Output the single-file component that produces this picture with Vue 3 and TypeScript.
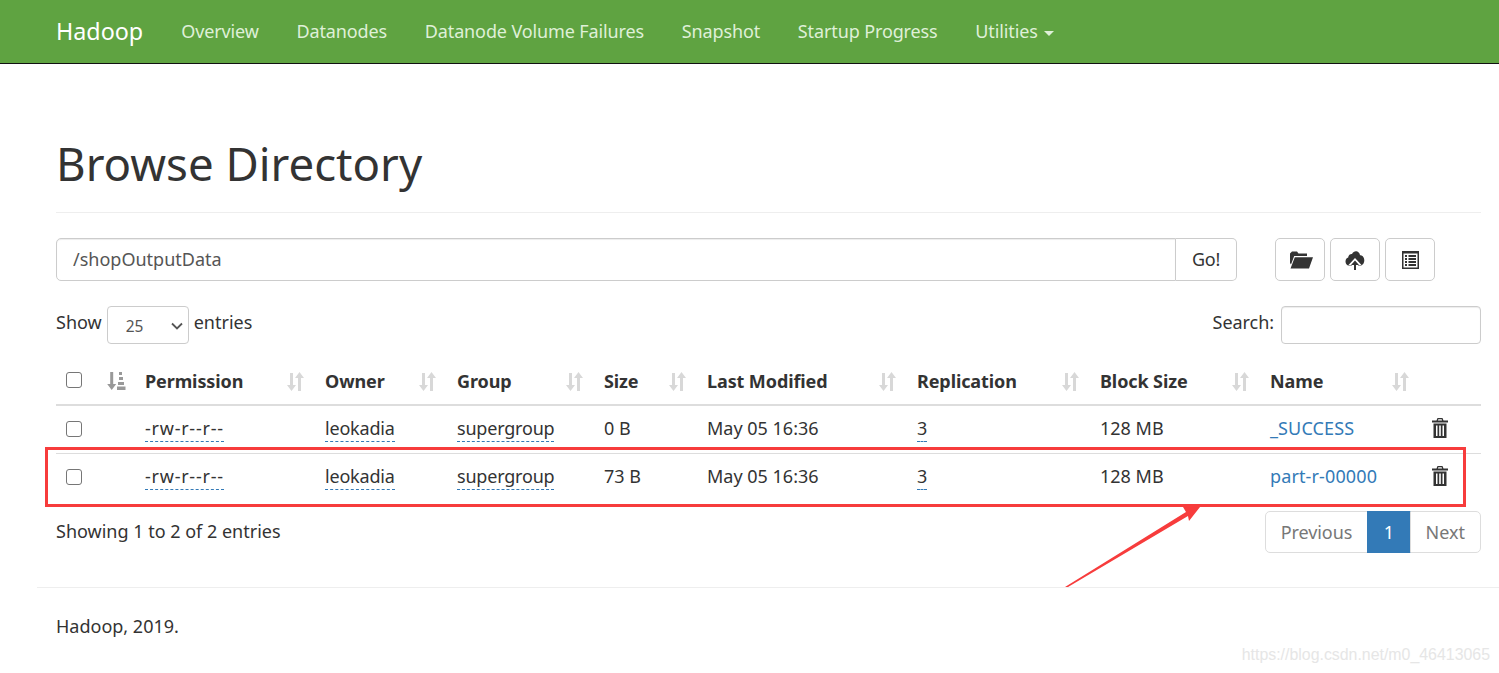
<script setup lang="ts">
const navItems = ['Overview', 'Datanodes', 'Datanode Volume Failures', 'Snapshot', 'Startup Progress']
const columns = ['Permission', 'Owner', 'Group', 'Size', 'Last Modified', 'Replication', 'Block Size', 'Name']
const rows = [
  { perm: '-rw-r--r--', owner: 'leokadia', group: 'supergroup', size: '0 B', name: '_SUCCESS' },
  { perm: '-rw-r--r--', owner: 'leokadia', group: 'supergroup', size: '73 B', name: 'part-r-00000' },
]
</script>

<template>
  <div class="page">
    <nav class="navbar">
      <a class="brand">Hadoop</a>
      <a v-for="n in navItems" :key="n" class="nav-link">{{ n }}</a>
      <a class="nav-link">Utilities <span class="caret"></span></a>
    </nav>

    <main class="container">
      <header class="page-header"><h1>Browse Directory</h1></header>

      <div class="toolbar">
        <div class="input-group">
          <input class="path" value="/shopOutputData" />
          <button class="go">Go!</button>
        </div>
        <div class="tools">
          <button class="tool" aria-label="Create directory">
            <svg class="folder" width="24" height="20" viewBox="0 0 24 20"><path fill="#333" d="M1 3.500 3 1.500h5l1.500 2H18v2.500H5.200L2 14.500 1 13zM5.800 7.200H24l-4 11.300H1.500z" /></svg>
          </button>
          <button class="tool" aria-label="Upload">
            <svg width="20" height="20" viewBox="0 0 20 20"><path fill="#333" d="M3.800 15.500C1.800 15.500 .5 13.500.5 11.500c0-2 1.200-3.500 2.700-3.900C3.400 5 5.300 3.600 7 4 8 2 9.800 1 11.500 1.300c2 .4 3.300 2 3.500 3.900 2.300-.2 4.300 2 4.300 5 0 2.800-1.700 5.300-3.800 5.300z" /><path fill="#fff" d="M10 8 16.500 15H13v5H7v-5H3.500z" /><path fill="#333" d="M10 10.500 14 15h-3v5H9v-5H6z" /></svg>
          </button>
          <button class="tool" aria-label="Toggle list">
            <svg width="17" height="18" viewBox="0 0 17 18"><path fill="#333" fill-rule="evenodd" d="M0 0h17v18H0zM1.500 2.500v14h14v-14z" /><path fill="#333" d="M3 4h2v2H3zM6.500 4H14v2H6.500zM3 7h2v2H3zM6.500 7H14v2H6.500zM3 10h2v2H3zM6.500 10H14v2H6.500zM3 13h2v2H3zM6.500 13H14v2H6.500z" /></svg>
          </button>
        </div>
      </div>

      <div class="controls">
        <label class="show">
          Show
          <span class="select-wrap">
            <select class="select"><option>25</option></select>
            <svg class="chevron" width="12" height="8" viewBox="0 0 12 8"><path d="M1 1.500 6 6.500 11 1.500" fill="none" stroke="#555" stroke-width="1.800" /></svg>
          </span>
          entries
        </label>
        <label class="search">Search: <input class="search-input" /></label>
      </div>

      <table class="table">
        <colgroup>
          <col style="width: 41px" /><col style="width: 38px" /><col style="width: 180px" /><col style="width: 132px" />
          <col style="width: 147px" /><col style="width: 103px" /><col style="width: 210px" /><col style="width: 183px" />
          <col style="width: 170px" /><col style="width: 160px" /><col />
        </colgroup>
        <thead>
          <tr>
            <th class="check"><input type="checkbox" class="cb" /></th>
            <th class="order">
              <svg width="19" height="19" viewBox="0 0 19 19"><path fill="#999" d="M3.200 1h3v12h3l-4.500 6-4.500-6h3zM12 1h3v3h-3zM12 6h4v3h-4zM11 11h6v3h-6zM10 15.500h8.500V19H10z" /></svg>
            </th>
            <th v-for="c in columns" :key="c">
              <span class="th-inner">
                {{ c }}
                <svg class="sort" width="17" height="19" viewBox="0 0 17 19"><path fill="#d8d8d8" d="M3 1h3v12h3l-4.500 6L0 13h3zM12.500 0 17 6h-3v13h-3V6H8z" /></svg>
              </span>
            </th>
            <th></th>
          </tr>
        </thead>
        <tbody>
          <tr v-for="(r, i) in rows" :key="i">
            <td class="check"><input type="checkbox" class="cb" /></td>
            <td></td>
            <td><span class="dashed perm">{{ r.perm }}</span></td>
            <td><span class="dashed">{{ r.owner }}</span></td>
            <td><span class="dashed">{{ r.group }}</span></td>
            <td>{{ r.size }}</td>
            <td>May 05 16:36</td>
            <td><span class="dashed">3</span></td>
            <td>128 MB</td>
            <td><a class="link">{{ r.name }}</a></td>
            <td class="trash">
              <svg width="16" height="20" viewBox="0 0 16 20"><path fill="#333" fill-rule="evenodd" d="M5.500 0h5l1 2.500H16v2H0v-2h4.500zM6.300 1.200 6 2.500h4l-.3-1.300zM1.500 5.500h13V20h-13zM4 7.500V18h1.500V7.500zM7.200 7.500V18h1.600V7.500zM10.500 7.500V18H12V7.500z" /></svg>
            </td>
          </tr>
        </tbody>
      </table>

      <div class="table-foot">
        <div class="info">Showing 1 to 2 of 2 entries</div>
        <div class="pagination">
          <a class="pg first">Previous</a><a class="pg active">1</a><a class="pg last">Next</a>
        </div>
      </div>
    </main>

    <hr class="foot-rule" />
    <footer class="footer">Hadoop, 2019.</footer>

    <svg class="annotation" width="1499" height="673" viewBox="0 0 1499 673">
      <rect x="46.500" y="448.500" width="1418" height="57" fill="none" stroke="#f73c3c" stroke-width="3" />
      <path fill="#f73c3c" d="M1065 587 1186 512 1183 507 1200 507 1189 521 1188 516 1068 587z" />
    </svg>
    <div class="watermark">https://blog.csdn.net/m0_46413065</div>
  </div>
</template>

<style>
html, body { margin: 0; background: #fff; }
</style>

<style scoped>
.page {
  position: relative;
  height: 673px;
  overflow: hidden;
  font-family: "Noto Sans", "Open Sans", sans-serif;
  font-size: 18px;
  color: #333;
}
.navbar {
  display: flex;
  align-items: center;
  padding-left: 56px;
  padding-bottom: 1px;
  height: 62px;
  background: #5fa341;
  border-bottom: 1px solid #111;
}
.brand { color: #fff; font-size: 23.300px; margin-right: 38px; }
.nav-link { color: #dff0d8; margin-right: 37.700px; letter-spacing: -0.12px; }
.caret {
  display: inline-block;
  width: 0;
  height: 0;
  margin-left: 2px;
  vertical-align: middle;
  border-top: 5px solid #dff0d8;
  border-left: 5px solid transparent;
  border-right: 5px solid transparent;
}
.container { padding: 0 18px 0 56px; }
.page-header {
  height: 149px;
  box-sizing: border-box;
  border-bottom: 1px solid #eee;
  display: flex;
  align-items: flex-end;
  padding-bottom: 21px;
}
h1 { margin: 0; font-size: 45.600px; font-weight: 400; line-height: 1.2; }
.toolbar { display: flex; margin-top: 25px; height: 43px; }
.input-group { display: flex; width: 1181px; }
.path {
  flex: 1;
  box-sizing: border-box;
  border: 1px solid #ccc;
  border-radius: 5px 0 0 5px;
  padding: 0 15px 2px 16px;
  font: inherit;
  color: #555;
  outline: none;
  box-shadow: inset 0 1px 1px rgba(0, 0, 0, 0.075);
}
.go {
  width: 61px;
  box-sizing: border-box;
  border: 1px solid #ccc;
  border-left: 0;
  border-radius: 0 5px 5px 0;
  padding: 0 0 2px;
  background: #fff;
  font: inherit;
  letter-spacing: -0.2px;
  color: #333;
}
.tools { display: flex; gap: 5px; margin-left: 38px; }
.tool {
  display: flex;
  align-items: center;
  justify-content: center;
  width: 50px;
  padding: 0;
  border: 1px solid #ccc;
  border-radius: 5px;
  background: #fff;
}
.folder { margin-left: 2px; }
.controls {
  display: flex;
  justify-content: space-between;
  align-items: flex-start;
  margin-top: 25px;
  height: 38px;
}
.show { display: flex; align-items: flex-start; gap: 5px; line-height: 32px; }
.select-wrap { position: relative; display: block; }
.select {
  appearance: none;
  display: block;
  width: 82px;
  height: 38px;
  box-sizing: border-box;
  padding: 2px 0 0 18px;
  border: 1px solid #ccc;
  border-radius: 4px;
  background: #fff;
  font: 15.500px "Noto Sans", sans-serif;
  color: #555;
}
.chevron { position: absolute; right: 6px; top: 16px; }
.search { display: flex; gap: 7px; line-height: 32px; letter-spacing: -0.05px; }
.search-input {
  width: 200px;
  height: 38px;
  box-sizing: border-box;
  border: 1px solid #ccc;
  border-radius: 4px;
  box-shadow: inset 0 1px 1px rgba(0, 0, 0, 0.075);
}
.table {
  width: 1425px;
  table-layout: fixed;
  border-collapse: collapse;
  margin-top: 12px;
}
th {
  height: 49px;
  padding: 2px 10px 0;
  text-align: left;
  font-weight: 700;
  border-bottom: 2px solid #ddd;
  box-sizing: border-box;
  letter-spacing: -0.1px;
  white-space: nowrap;
}
td {
  height: 48px;
  padding: 0 10px 2px;
  border-bottom: 1px solid #ddd;
  box-sizing: border-box;
  white-space: nowrap;
}
tbody tr:last-child td { border-bottom: 0; }
.th-inner { display: flex; align-items: center; justify-content: space-between; padding-right: 1px; }
.sort { flex: none; }
th.check, td.check { padding: 0 10px; }
th.order { padding: 0 0 0 10px; }
.order svg, .trash svg { display: block; }
.cb {
  appearance: none;
  display: block;
  width: 16px;
  height: 16px;
  margin: 0;
  border: 1.300px solid #767676;
  border-radius: 3px;
  background: #fff;
}
.dashed { border-bottom: 1px dashed #337ab7; padding-bottom: 1px; letter-spacing: -0.2px; }
.perm { letter-spacing: 0.75px; }
.link { color: #337ab7; letter-spacing: 0.12px; }
td.trash { padding: 0 0 3px 12px; }
.table-foot {
  display: flex;
  justify-content: space-between;
  align-items: flex-start;
  margin-top: 10px;
}
.info { margin-top: 8px; }
.pagination { display: flex; height: 42px; }
.pg {
  display: flex;
  align-items: center;
  padding: 0 15px;
  border: 1px solid #ddd;
  margin-left: -1px;
  color: #777;
}
.first { border-radius: 5px 0 0 5px; letter-spacing: -0.1px; }
.last { border-radius: 0 5px 5px 0; }
.active { background: #337ab7; border-color: #337ab7; color: #fff; padding: 0 15.500px; }
.foot-rule {
  margin: 34px 0 0 37px;
  border: 0;
  border-top: 1px solid #eee;
}
.footer { margin: 26px 0 0 56px; }
.annotation { position: absolute; left: 0; top: 0; pointer-events: none; }
.watermark {
  position: absolute;
  right: 9px;
  top: 646px;
  font-family: "Liberation Sans", sans-serif;
  font-size: 15.900px;
  color: #e6e6e6;
}
</style>
